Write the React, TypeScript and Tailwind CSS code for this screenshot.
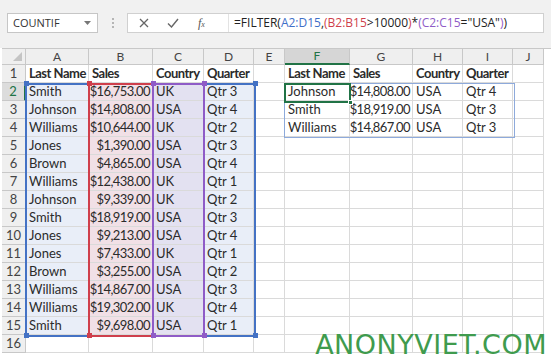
const data = [
  ["Smith", "$16,753.00", "UK", "Qtr 3"],
  ["Johnson", "$14,808.00", "USA", "Qtr 4"],
  ["Williams", "$10,644.00", "UK", "Qtr 2"],
  ["Jones", "$1,390.00", "USA", "Qtr 3"],
  ["Brown", "$4,865.00", "USA", "Qtr 4"],
  ["Williams", "$12,438.00", "UK", "Qtr 1"],
  ["Johnson", "$9,339.00", "UK", "Qtr 2"],
  ["Smith", "$18,919.00", "USA", "Qtr 3"],
  ["Jones", "$9,213.00", "USA", "Qtr 4"],
  ["Jones", "$7,433.00", "UK", "Qtr 1"],
  ["Brown", "$3,255.00", "USA", "Qtr 2"],
  ["Williams", "$14,867.00", "USA", "Qtr 3"],
  ["Williams", "$19,302.00", "UK", "Qtr 4"],
  ["Smith", "$9,698.00", "USA", "Qtr 1"],
];

const result = [
  ["Johnson", "$14,808.00", "USA", "Qtr 4"],
  ["Smith", "$18,919.00", "USA", "Qtr 3"],
  ["Williams", "$14,867.00", "USA", "Qtr 3"],
];

const header = ["Last Name", "Sales", "Country", "Quarter"];
const letters = ["", "A", "B", "C", "D", "E", "F", "G", "H", "I", "J"];

function cellText(r: number, c: number): string {
  // r: 1..16, c: 1..10
  if (r === 1) {
    if (c >= 1 && c <= 4) return header[c - 1];
    if (c >= 6 && c <= 9) return header[c - 6];
    return "";
  }
  if (c >= 1 && c <= 4 && r <= 15) return data[r - 2][c - 1];
  if (c >= 6 && c <= 9 && r <= 4) return result[r - 2][c - 6];
  return "";
}

function fill(r: number, c: number) {
  if (r < 2 || r > 15) return "bg-white";
  if (c === 1 || c === 4) return "bg-[#e9eef8]";
  if (c === 2) return "bg-[#f1e0e6]";
  if (c === 3) return "bg-[#e3e1f1]";
  return "bg-white";
}

function Sheet() {
  const cells = [];
  // header row
  for (let c = 0; c <= 10; c++) {
    if (c === 0) {
      cells.push(
        <div key="corner" className="relative border-r border-b border-[#c8c8c8] bg-[#efefef]">
          <svg className="absolute right-[3px] bottom-[3px]" width="9" height="9" viewBox="0 0 9 9">
            <path d="M9 0 L9 9 L0 9 Z" fill="#c4c4c4" />
          </svg>
        </div>
      );
    } else if (c === 6) {
      cells.push(
        <div key={"h" + c} className="flex items-center justify-center border-r border-[#c8c8c8] border-b-2 border-b-[#217346] bg-[#d6d6d6] text-[12px] text-[#217346]">
          {letters[c]}
        </div>
      );
    } else {
      cells.push(
        <div key={"h" + c} className="flex items-center justify-center border-r border-b border-[#c8c8c8] bg-[#efefef] text-[12px] text-[#444]">
          {letters[c]}
        </div>
      );
    }
  }
  for (let r = 1; r <= 16; r++) {
    cells.push(
      r === 2 ? (
        <div key={"r" + r} className="flex items-center justify-center border-b border-[#c8c8c8] border-r-2 border-r-[#217346] bg-[#dcdcdc] text-[13px] text-[#217346]">
          {r}
        </div>
      ) : (
        <div key={"r" + r} className="flex items-center justify-center border-r border-b border-[#c8c8c8] bg-[#efefef] text-[13px] text-[#444]">
          {r}
        </div>
      )
    );
    for (let c = 1; c <= 10; c++) {
      const t = cellText(r, c);
      const num = t.startsWith("$");
      cells.push(
        <div
          key={r + "-" + c}
          className={`flex items-center overflow-hidden whitespace-nowrap border-r border-b border-[#dadada] text-[13px] text-[#2b2b2b] ${fill(r, c)} ${
            num ? "justify-end pr-[2px] tracking-[-0.6px]" : "pl-[3px]"
          } ${r === 1 ? "font-bold tracking-[-0.5px]" : ""}`}
        >
          {t}
        </div>
      );
    }
  }

  return (
    <div className="relative ml-[2px] grid grid-cols-[24px_63px_64px_51px_50px_31px_65px_63px_50px_50px_31px] grid-rows-[16px_repeat(16,18px)] border-t border-[#c8c8c8] font-['Lato',sans-serif]">
      {cells}

      {/* reference ranges of the formula */}
      <div className="absolute left-[23px] top-[34px] h-[254px] w-[231px] border-2 border-[#4472c4]" />
      <div className="absolute left-[86px] top-[34px] h-[254px] w-[66px] border-2 border-[#cf3f4c]" />
      <div className="absolute left-[150px] top-[34px] h-[254px] w-[53px] border-2 border-[#8f5cc7]" />
      {[
        ["left-[22px] top-[32px]", "bg-[#4472c4]"],
        ["left-[85px] top-[32px]", "bg-[#cf3f4c]"],
        ["left-[149px] top-[32px]", "bg-[#8f5cc7]"],
        ["left-[200px] top-[32px]", "bg-[#8f5cc7]"],
        ["left-[251px] top-[32px]", "bg-[#4472c4]"],
        ["left-[22px] top-[284px]", "bg-[#4472c4]"],
        ["left-[85px] top-[284px]", "bg-[#cf3f4c]"],
        ["left-[149px] top-[284px]", "bg-[#8f5cc7]"],
        ["left-[200px] top-[284px]", "bg-[#8f5cc7]"],
        ["left-[251px] top-[284px]", "bg-[#4472c4]"],
      ].map(([pos, bg]) => (
        <div key={pos} className={`absolute h-[5px] w-[5px] ${pos} ${bg}`} />
      ))}

      {/* spill range + active cell */}
      <div className="absolute left-[282px] top-[34px] h-[55px] w-[231px] border border-[#8eaadb]" />
      <div className="absolute left-[282px] top-[34px] h-[20px] w-[67px] border-2 border-[#217346]" />
      <div className="absolute left-[346px] top-[51px] h-[5px] w-[5px] border border-white bg-[#217346]" />
    </div>
  );
}

function FormulaBar() {
  return (
    <div className="flex h-[48px] items-start bg-[#f1f1f1] pl-[7px] pt-[13px] font-['Open_Sans',sans-serif]">
      <div className="flex h-[20px] w-[91px] items-center justify-between border border-[#c6c6c6] bg-white pl-[5px] pr-[6px] text-[11px] text-[#333]">
        <span>COUNTIF</span>
        <svg width="7" height="4" viewBox="0 0 7 4">
          <path d="M0 0 L7 0 L3.5 4 Z" fill="#777" />
        </svg>
      </div>
      <div className="flex h-[20px] w-[29px] flex-col items-center justify-center gap-[2px]">
        <span className="h-[2px] w-[2px] bg-[#b5b5b5]" />
        <span className="h-[2px] w-[2px] bg-[#b5b5b5]" />
        <span className="h-[2px] w-[2px] bg-[#b5b5b5]" />
      </div>
      <div className="flex h-[20px] w-[417px] items-center border border-[#d0d0d0] bg-white">
        <div className="flex h-full w-[100px] items-center">
          <svg className="ml-[11px]" width="10" height="10" viewBox="0 0 10 10">
            <path d="M1 1 L9 9 M9 1 L1 9" stroke="#666" strokeWidth="1.3" />
          </svg>
          <svg className="ml-[18px]" width="12" height="10" viewBox="0 0 12 10">
            <path d="M1 5.5 L4.5 9 L11 1" stroke="#666" strokeWidth="1.4" fill="none" />
          </svg>
          <span className="ml-[19px] font-['Liberation_Serif',serif] text-[12px] italic text-[#555]">
            f<span className="text-[8px]">x</span>
          </span>
        </div>
        <div className="h-full border-l border-[#e3e3e3] pl-[5px] text-[12px] leading-[18px] text-[#222] whitespace-nowrap">
          =FILTER(<span className="text-[#3f6fc8]">A2:D15</span>,<span className="text-[#cf3f4c]">(B2:B15</span>&gt;10000<span className="text-[#cf3f4c]">)</span>*<span className="text-[#8f5cc7]">(C2:C15</span>="USA"<span className="text-[#8f5cc7]">)</span>)
        </div>
      </div>
    </div>
  );
}

export default function App() {
  return (
    <div className="relative h-[359px] w-[551px] overflow-hidden bg-white">
      <FormulaBar />
      <Sheet />
      <div className="absolute bottom-[1px] right-[4px] font-['DejaVu_Sans',sans-serif] text-[27px] leading-none tracking-[0.5px] text-[#3f9b4e]">
        ANONYVIET.COM
      </div>
    </div>
  );
}
